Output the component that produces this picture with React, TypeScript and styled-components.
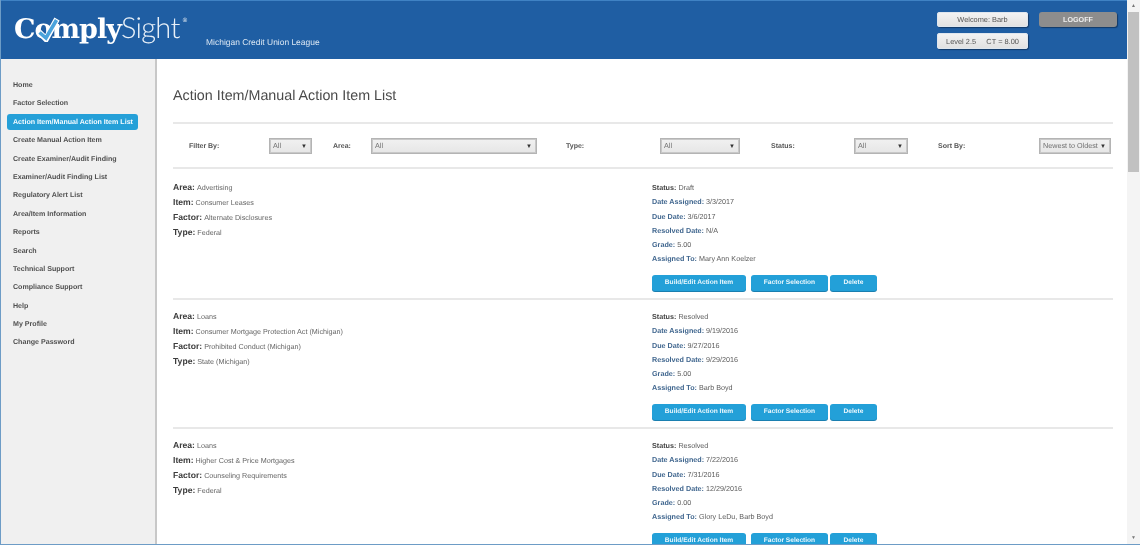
import React from "react";
import styled, { createGlobalStyle } from "styled-components";

const Global = createGlobalStyle`
  html, body { margin: 0; padding: 0; height: 100%; overflow: hidden; background: #fff; }
  body { font-family: "Liberation Sans", Arial, sans-serif; text-rendering: geometricPrecision; }
  #root { height: 100%; }
`;

const Frame = styled.div`
  box-sizing: border-box; display: flex; width: 1140px; height: 545px; overflow: hidden;
  border-left: 1px solid #6d9cc6; border-bottom: 1px solid #6d9cc6; filter: blur(0.35px); will-change: transform;
`;
const Page = styled.div`display: flex; flex-direction: column; width: 1126px; flex: none;`;
const Header = styled.header`
  flex: none; box-sizing: border-box; height: 59px; display: flex; background: #1f5ea3;
  border-top: 1px solid #3f82c4; padding-left: 13px; position: relative;
`;
const Logo = styled.div`
  position: relative; display: flex; align-items: baseline; color: #fff; height: 40px; padding-top: 10px;
  line-height: 34px;
`;
const Comply = styled.span`
  font-family: "DejaVu Serif", serif; font-weight: 700; font-size: 27px; letter-spacing: -1px;
`;
const Sight = styled.span`
  font-family: Lato, "Open Sans", sans-serif; font-weight: 300; font-size: 29px; letter-spacing: -0.7px; color: #e8f0f8;
`;
const Reg = styled.span`font-size: 6px; align-self: flex-start; line-height: 20px; margin-left: 3px;`;
const CheckMark = styled.svg`position: absolute; left: 22px; top: 15px; width: 24px; height: 26px;`;
const Org = styled.div`
  font-size: 8.45px; color: #dbe7f3; margin-left: 19px; padding-top: 35px; line-height: 12px; white-space: nowrap;
`;
const UserArea = styled.div`
  margin-left: auto; margin-right: 10px; padding-top: 11px;
  display: grid; grid-template-columns: 91px 78px; column-gap: 11px; row-gap: 6px; grid-auto-rows: min-content;
`;
const InfoBox = styled.div<{ $h: number }>`
  height: ${(p) => p.$h}px; border-radius: 3px; background: linear-gradient(#f4f4f4, #e0e0e0); color: #555;
  font-size: 7.4px; display: flex; align-items: center; justify-content: center; white-space: pre;
  box-shadow: 1px 1px 1px #123a68, 0 0 0 1px #dfe6ee inset;
`;
const Logoff = styled.div`
  height: 15px; border-radius: 3px; background: #8d8d8d; color: #eee; font-size: 7.2px; font-weight: 700;
  display: flex; align-items: center; justify-content: center; box-shadow: 1px 1px 1px #123a68;
`;

const Body = styled.div`flex: 1; min-height: 0; display: flex;`;
const Sidebar = styled.nav`
  flex: none; box-sizing: border-box; width: 156px; background: #f0f0f0; border-right: 2px solid #c8c8c8;
  padding-top: 18px;
`;
const NavItem = styled.div<{ $active?: boolean }>`
  box-sizing: border-box; height: 16px; margin: 0 17px 2.4px 6px; padding-left: 6px; line-height: 16px;
  font-size: 7.1px; font-weight: 700; white-space: nowrap; border-radius: 3px;
  color: ${(p) => (p.$active ? "#f4fbff" : "#505050")};
  background: ${(p) => (p.$active ? "#25a0d8" : "transparent")};
`;
const Main = styled.main`flex: 1; min-width: 0; padding: 0 14px 0 16px; overflow: hidden; background: #fff;`;
const Title = styled.h1`
  margin: 0; height: 65px; box-sizing: border-box; padding-top: 27px; line-height: 20px;
  font-size: 14.3px; font-weight: 400; color: #4a4a4a; border-bottom: 2px solid #e8e8e8;
`;
const Filters = styled.div`
  display: flex; align-items: center; height: 45px; box-sizing: border-box; padding: 1px 0 0 16px; border-bottom: 2px solid #e8e8e8;
`;
const FilterLabel = styled.div<{ $w: number; $ml?: number }>`
  flex: none; width: ${(p) => p.$w}px; margin-left: ${(p) => p.$ml ?? 0}px;
  font-size: 7px; font-weight: 700; color: #555; padding-top: 1px;
`;
const Select = styled.div<{ $w: number }>`
  flex: none; box-sizing: border-box; width: ${(p) => p.$w}px; height: 16px; padding: 0 4px 2px 3px;
  display: flex; align-items: center; justify-content: space-between;
  background: linear-gradient(#f1f1f1, #e6e6e6); border: 1px solid #b4b4b4; outline: 1px solid #c8c8c8; outline-offset: -2px;
  font-size: 7.2px; color: #707070; white-space: nowrap;
`;
const Arrow = styled.span`font-size: 6px; line-height: 1; padding-top: 3px; color: #333;`;
const RowList = styled.div`padding-top: 2px;`;
const Row = styled.section`
  display: flex; height: 129px; box-sizing: border-box; padding-top: 9px; border-bottom: 2px solid #e8e8e8;
`;
const LeftCol = styled.div`flex: none; width: 479px;`;
const LeftLine = styled.div`line-height: 15px; height: 15px; font-size: 7.2px; color: #666; white-space: nowrap;`;
const LeftKey = styled.b`font-size: 8.6px; color: #3c3c3c; margin-right: 2px;`;
const RightCol = styled.div`flex: none; padding-top: 1px;`;
const RightLine = styled.div`line-height: 14.3px; height: 14.3px; font-size: 7.2px; color: #5c5c5c; white-space: nowrap;`;
const RightKey = styled.b<{ $plain?: boolean }>`color: ${(p) => (p.$plain ? "#444" : "#41678f")}; margin-right: 2px;`;
const Actions = styled.div`display: flex; margin-top: 8px;`;
const ActionButton = styled.div<{ $w: number; $mr: number }>`
  box-sizing: border-box; width: ${(p) => p.$w}px; margin-right: ${(p) => p.$mr}px; height: 16px; border-radius: 3px;
  background: #23a0d8; color: #eaf7fd; font-size: 6.6px; font-weight: 700; display: flex; align-items: center; justify-content: center;
  box-shadow: 0 1px 0 #1a7fb0;
`;
const Scrollbar = styled.div`
  flex: none; width: 13px; background: #f4f4f4; display: flex; flex-direction: column; align-items: center;
`;
const ScrollArrow = styled.div`flex: none; height: 12px; line-height: 12px; font-size: 5px; color: #777;`;
const Thumb = styled.div`flex: none; width: 11px; height: 160px; background: #c1c1c1;`;
const ScrollSpacer = styled.div`flex: 1;`;

const nav = ["Home", "Factor Selection", "Action Item/Manual Action Item List", "Create Manual Action Item", "Create Examiner/Audit Finding", "Examiner/Audit Finding List", "Regulatory Alert List", "Area/Item Information", "Reports", "Search", "Technical Support", "Compliance Support", "Help", "My Profile", "Change Password"];

const items = [
  { area: "Advertising", item: "Consumer Leases", factor: "Alternate Disclosures", type: "Federal", status: "Draft", assigned: "3/3/2017", due: "3/6/2017", resolved: "N/A", grade: "5.00", to: "Mary Ann Koelzer" },
  { area: "Loans", item: "Consumer Mortgage Protection Act (Michigan)", factor: "Prohibited Conduct (Michigan)", type: "State (Michigan)", status: "Resolved", assigned: "9/19/2016", due: "9/27/2016", resolved: "9/29/2016", grade: "5.00", to: "Barb Boyd" },
  { area: "Loans", item: "Higher Cost & Price Mortgages", factor: "Counseling Requirements", type: "Federal", status: "Resolved", assigned: "7/22/2016", due: "7/31/2016", resolved: "12/29/2016", grade: "0.00", to: "Glory LeDu, Barb Boyd" },
];

export default function App() {
  return (
    <Frame>
      <Global />
      <Page>
        <Header>
          <Logo>
            <Comply>Comply</Comply><Sight>Sight</Sight><Reg>®</Reg>
            <CheckMark viewBox="0 0 24 26">
              <path d="M3 16 L10 23 L21 3" fill="none" stroke="#fff" strokeWidth="6" />
              <path d="M3.5 16.5 L10 22 L20.5 4" fill="none" stroke="#4aa3dc" strokeWidth="3.6" />
            </CheckMark>
          </Logo>
          <Org>Michigan Credit Union League</Org>
          <UserArea>
            <InfoBox $h={15}>Welcome: Barb</InfoBox>
            <Logoff>LOGOFF</Logoff>
            <InfoBox $h={16}>{"Level 2.5     CT = 8.00"}</InfoBox>
          </UserArea>
        </Header>
        <Body>
          <Sidebar>
            {nav.map((n, i) => <NavItem key={n} $active={i === 2}>{n}</NavItem>)}
          </Sidebar>
          <Main>
            <Title>Action Item/Manual Action Item List</Title>
            <Filters>
              <FilterLabel $w={80}>Filter By:</FilterLabel>
              <Select $w={43}>All<Arrow>▼</Arrow></Select>
              <FilterLabel $w={38} $ml={21}>Area:</FilterLabel>
              <Select $w={166}>All<Arrow>▼</Arrow></Select>
              <FilterLabel $w={94} $ml={29}>Type:</FilterLabel>
              <Select $w={80}>All<Arrow>▼</Arrow></Select>
              <FilterLabel $w={83} $ml={31}>Status:</FilterLabel>
              <Select $w={54}>All<Arrow>▼</Arrow></Select>
              <FilterLabel $w={101} $ml={30}>Sort By:</FilterLabel>
              <Select $w={72}>Newest to Oldest<Arrow>▼</Arrow></Select>
            </Filters>
            <RowList>
              {items.map((r, i) => (
                <Row key={i}>
                  <LeftCol>
                    <LeftLine><LeftKey>Area:</LeftKey>{r.area}</LeftLine>
                    <LeftLine><LeftKey>Item:</LeftKey>{r.item}</LeftLine>
                    <LeftLine><LeftKey>Factor:</LeftKey>{r.factor}</LeftLine>
                    <LeftLine><LeftKey>Type:</LeftKey>{r.type}</LeftLine>
                  </LeftCol>
                  <RightCol>
                    <RightLine><RightKey $plain>Status:</RightKey>{r.status}</RightLine>
                    <RightLine><RightKey>Date Assigned:</RightKey>{r.assigned}</RightLine>
                    <RightLine><RightKey>Due Date:</RightKey>{r.due}</RightLine>
                    <RightLine><RightKey>Resolved Date:</RightKey>{r.resolved}</RightLine>
                    <RightLine><RightKey>Grade:</RightKey>{r.grade}</RightLine>
                    <RightLine><RightKey>Assigned To:</RightKey>{r.to}</RightLine>
                    <Actions>
                      <ActionButton $w={94} $mr={5}>Build/Edit Action Item</ActionButton>
                      <ActionButton $w={77} $mr={2}>Factor Selection</ActionButton>
                      <ActionButton $w={47} $mr={0}>Delete</ActionButton>
                    </Actions>
                  </RightCol>
                </Row>
              ))}
            </RowList>
          </Main>
        </Body>
      </Page>
      <Scrollbar>
        <ScrollArrow>▲</ScrollArrow>
        <Thumb />
        <ScrollSpacer />
        <ScrollArrow>▼</ScrollArrow>
      </Scrollbar>
    </Frame>
  );
}
